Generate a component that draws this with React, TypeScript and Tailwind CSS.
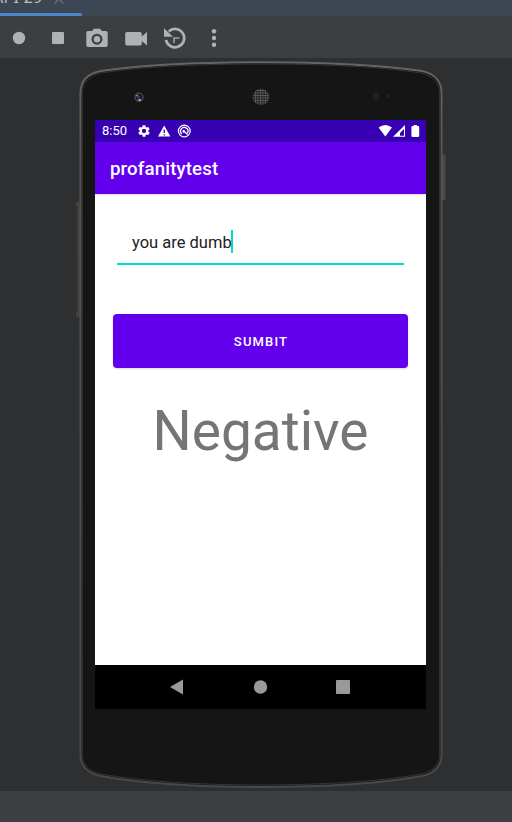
import React from 'react';

function Toolbar() {
  return (
    <div className="flex h-[42px] shrink-0 bg-[#3c3f41]">
      <svg width="240" height="42" viewBox="0 16 240 42" fill="#afb1b3">
        <circle cx="19" cy="38" r="6.2" />
        <rect x="52" y="32" width="12" height="12" rx="1" />
        <path fillRule="evenodd" d="M88 31h4l2-2.3h6l2 2.3h4q1.7 0 1.7 1.7v12.6q0 1.7-1.7 1.7H88q-1.7 0-1.7-1.7V32.700q0-1.700 1.700-1.700ZM97 33.700a5.500 5.500 0 1 0 0 11a5.500 5.500 0 0 0 0-11Z" />
        <circle cx="97" cy="39.200" r="3.200" />
        <path d="M127 32h13q1.800 0 1.800 1.800v2.700L147 32v13.500l-5.200-4.500v2.700q0 1.800-1.800 1.800h-13q-1.800 0-1.800-1.800v-9.900q0-1.800 1.800-1.800Z" />
        <path d="M166 40a9.200 9.200 0 1 0 2.700-8.600" fill="none" stroke="#afb1b3" strokeWidth="2.700" />
        <path d="M164 28.200v8.500h9Z" />
        <path d="M174 43v-5h5.500" fill="none" stroke="#a0a2a4" strokeWidth="1.600" />
        <circle cx="214" cy="31.200" r="2.200" />
        <circle cx="214" cy="38" r="2.200" />
        <circle cx="214" cy="44.800" r="2.200" />
      </svg>
    </div>
  );
}

function PhoneBody() {
  return (
    <svg className="absolute inset-0" width="512" height="733" viewBox="0 58 512 733">
      <defs>
        <linearGradient id="rim" x1="0" y1="0" x2="0" y2="1">
          <stop offset="0" stopColor="#656565" />
          <stop offset="0.15" stopColor="#555555" />
          <stop offset="1" stopColor="#484848" />
        </linearGradient>
        <pattern id="mesh" width="2.500" height="2.500" patternUnits="userSpaceOnUse">
          <rect width="2.500" height="2.500" fill="#5c5c5c" />
          <rect x="0.800" y="0.800" width="1.700" height="1.700" fill="#1b1b1b" />
        </pattern>
      </defs>
      <rect x="76" y="202" width="4" height="115" rx="1.500" fill="#424242" />
      <rect x="76.500" y="206" width="1" height="106" fill="#292929" />
      <rect x="441.500" y="154" width="4" height="46" rx="1.500" fill="#494949" />
      <path d="M80.500 93C80.500 81 88 73.500 101 71C145 64.500 205 62.200 261 62.200S377 64.500 422 71C434 73.500 441.500 81 441.500 93V756C441.500 766 433 774 422 776C377 784 317 787 261 787S145 784 101 776C89 774 80.500 766 80.500 756Z" fill="#151515" stroke="url(#rim)" strokeWidth="2" />
      <path d="M82.300 94C82.300 83 89 76 101 73C145 66 205 64 261 64S377 66 421 73C433 76 439.700 83 439.700 94V755C439.700 765 431 772 421 774C377 782 317 785 261 785S145 782 101 774C91 772 82.300 765 82.300 755Z" fill="none" stroke="#353535" strokeWidth="1" />
      <circle cx="139" cy="97.300" r="4.700" fill="#4a4a4a" />
      <circle cx="139" cy="97" r="3.300" fill="#171726" />
      <circle cx="138.700" cy="97" r="1.700" fill="#34377a" />
      <circle cx="137" cy="95.500" r="0.900" fill="#999" />
      <circle cx="139.700" cy="100" r="1.300" fill="#a0a0a0" />
      <circle cx="261" cy="97" r="8.300" fill="url(#mesh)" />
      <circle cx="376" cy="96" r="3.500" fill="#202020" />
      <circle cx="388.500" cy="96" r="2" fill="#222" />
    </svg>
  );
}

function StatusBar() {
  return (
    <div className="flex h-[22px] shrink-0 items-center bg-[#3700b3] text-[13px] text-white">
      <span className="ml-[7px] w-[36px] leading-[22px]">8:50</span>
      <svg width="288" height="22" viewBox="138 120 288 22" fill="#fff">
        <g transform="translate(136.800 123.800) scale(.6)">
          <path d="M19.140 12.940c.04-.3.060-.61.060-.94s-.02-.64-.07-.94l2.030-1.580a.49.49 0 0 0 .12-.61l-1.920-3.320a.49.49 0 0 0-.59-.22l-2.390.96a7 7 0 0 0-1.620-.94L14.400 2.810a.48.48 0 0 0-.48-.41h-3.840a.47.47 0 0 0-.47.41L9.250 5.350a7 7 0 0 0-1.620.94l-2.390-.96a.48.48 0 0 0-.59.22L2.740 8.870a.47.47 0 0 0 .12.61l2.030 1.580a6 6 0 0 0 0 1.880l-2.030 1.580a.49.49 0 0 0-.12.610l1.920 3.320c.12.22.37.29.59.22l2.390-.96c.5.380 1.030.7 1.620.94l.36 2.540c.05.24.24.41.48.41h3.840c.24 0 .44-.17.47-.41l.36-2.540a7 7 0 0 0 1.620-.94l2.390.96c.22.080.47 0 .59-.22l1.920-3.320a.47.47 0 0 0-.12-.610ZM12 15.600a3.600 3.600 0 1 1 0-7.200 3.600 3.600 0 0 1 0 7.200Z" />
        </g>
        <path fillRule="evenodd" d="M164.200 125.500l6.200 11h-12.400ZM163.600 129.500v3.500h1.300v-3.500ZM163.600 134.200v1.300h1.300v-1.300Z" />
        <circle cx="184.300" cy="131" r="5.900" fill="none" stroke="#fff" strokeWidth="1.200" />
        <path d="M181.800 133.900a3.700 3.700 0 1 1 5.700-.9M183 130.200l4.600 4.200" fill="none" stroke="#fff" strokeWidth="1.300" />
        <circle cx="183.800" cy="131.400" r="1.300" />
        <path d="M378.600 127.600q6.700-5 13.400 0L385.300 136.600Z" />
        <path fillRule="evenodd" d="M405 125v11.800h-12ZM404 129l-4 4v2.800h4Z" />
        <path d="M413.700 125h3.200v1h1q1.300 0 1.300 1.200v8.500q0 1.200-1.300 1.200h-5.200q-1.300 0-1.300-1.200v-8.500q0-1.200 1.300-1.200h1Z" />
      </svg>
    </div>
  );
}

function Screen() {
  return (
    <div className="relative mt-[62px] ml-[95px] flex h-[589px] w-[331px] flex-col bg-white">
      <StatusBar />
      <div className="z-10 flex h-[52px] shrink-0 items-center bg-[#6200ee] pl-[15px] text-[18.700px] font-medium text-white shadow-[0_1px_2px_rgba(0,0,0,0.15)]">
        <span className="mt-px leading-6 tracking-[0.120px]">profanitytest</span>
      </div>
      <div className="flex grow flex-col">
        <div className="mt-[30px] ml-[22px] flex h-[41px] w-[287px] items-start border-b-2 border-[#03dac5] pl-[15px]">
          <span className="mt-[7px] w-[99px] text-[16.500px] leading-[24px] whitespace-nowrap text-[#212121]">you are dumb</span>
          <span className="mt-[6px] h-[23px] w-[2px] bg-[#03dac5]" />
        </div>
        <button className="mt-[49px] ml-[18px] h-[54px] w-[295px] rounded-[4px] bg-[#6200ee] pt-px pl-px text-[13px] font-medium tracking-[1.150px] text-white shadow-[0_1px_2px_rgba(0,0,0,0.15)]">SUMBIT</button>
        <div className="mt-[31px] text-center text-[55px] leading-[64px] text-[#757575]">Negative</div>
      </div>
      <div className="flex h-[44px] shrink-0 bg-black">
        <svg width="331" height="44" viewBox="95 665 331 44" fill="#999">
          <path d="M170 687l13-7.500v15Z" />
          <circle cx="260.500" cy="687" r="6.700" />
          <rect x="336" y="680" width="14" height="14" rx="0.800" />
        </svg>
      </div>
    </div>
  );
}

export default function App() {
  return (
    <div className="flex h-[822px] w-[512px] flex-col overflow-hidden bg-[#2d2f31] font-[Roboto,sans-serif]">
      <div className="flex h-4 shrink-0 overflow-hidden bg-[#3d4754]">
        <div className="relative h-4 w-[82px] text-[#bbbbbb]">
          <span className="absolute -top-[12px] -left-[7px] font-['Noto_Sans',sans-serif] text-[16px] leading-[18px] tracking-[0.300px] whitespace-nowrap">API 29</span>
          <svg className="absolute top-0 left-[53px]" width="13" height="4" viewBox="0 0 13 4"><path d="M1.500 3.500L6 -1l4.500 4.500" fill="none" stroke="#6e757c" strokeWidth="1.300" /></svg>
          <div className="absolute bottom-0 left-0 h-[3px] w-[82px] rounded-r-[2px] bg-[#4a88c7]" />
        </div>
      </div>
      <Toolbar />
      <div className="relative flex h-[733px] shrink-0 items-start">
        <PhoneBody />
        <Screen />
      </div>
      <div className="h-[31px] shrink-0 bg-[#3c3f41]" />
    </div>
  );
}
